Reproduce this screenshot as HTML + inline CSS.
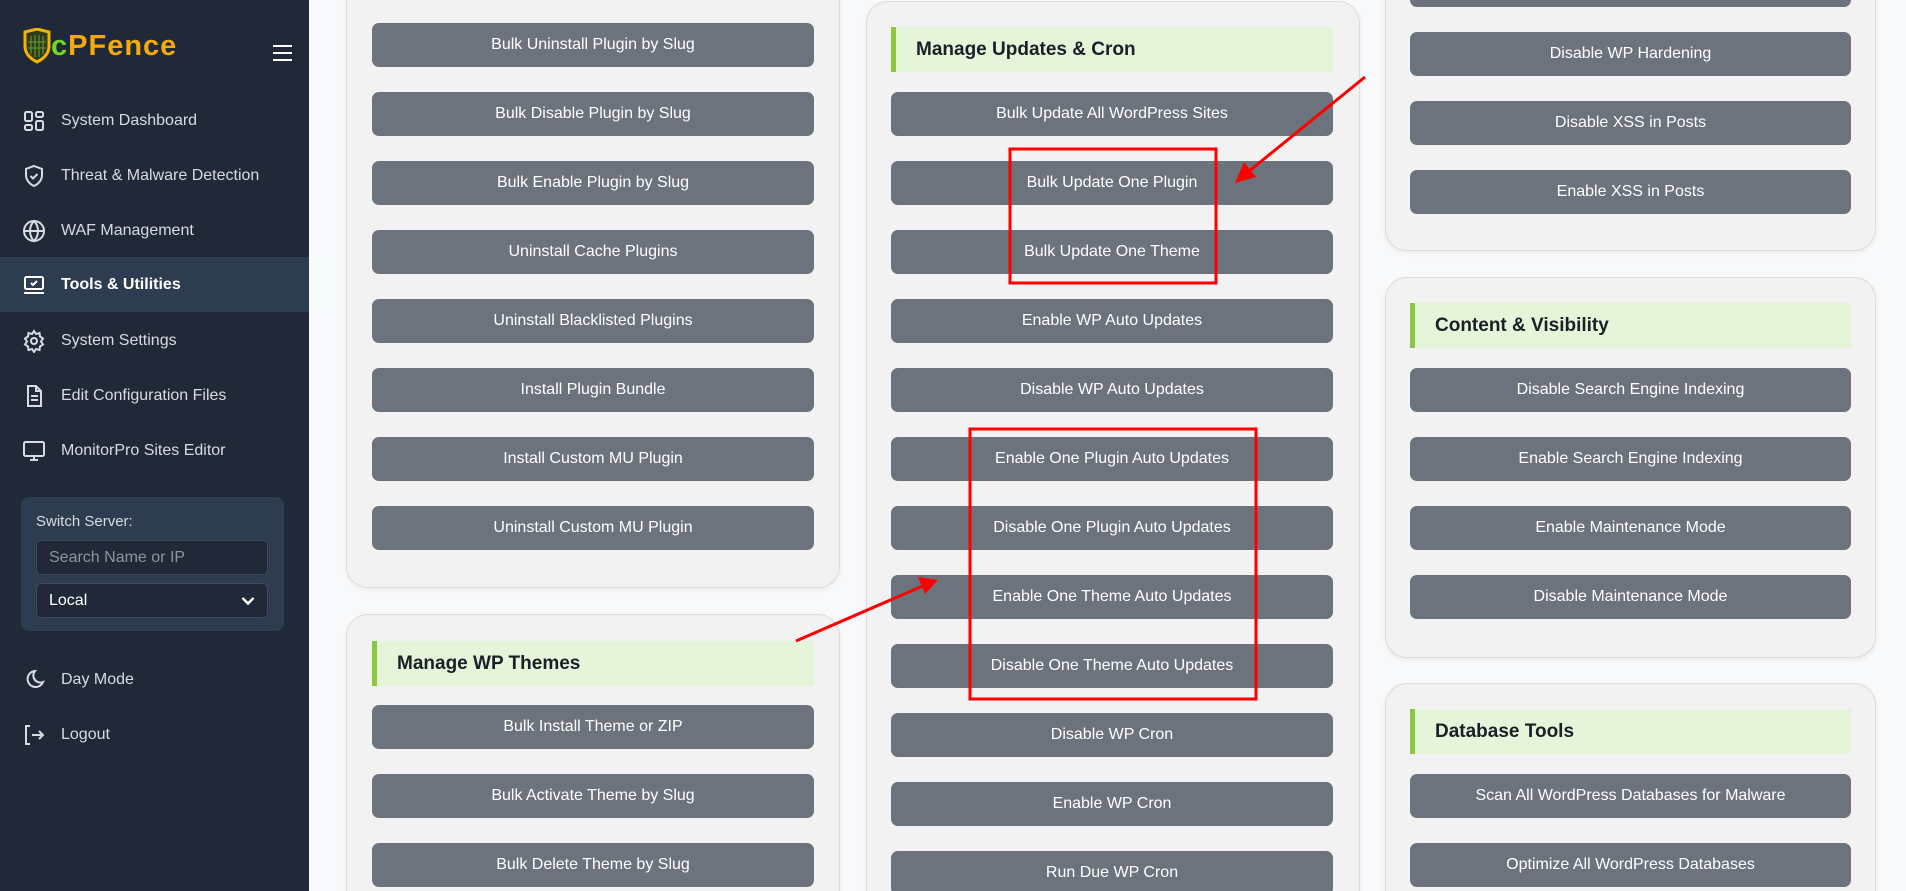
<!DOCTYPE html>
<html><head><meta charset="utf-8"><style>
*{box-sizing:border-box;margin:0;padding:0}
html,body{width:1906px;height:891px;overflow:hidden}
body{background:#f8f9fb;font-family:"Liberation Sans",sans-serif}
#wrap{position:relative;width:1906px;height:891px;overflow:hidden;background:#f8f9fb}
.sb{position:absolute;left:0;top:0;width:309px;height:891px;background:#1f2937}
.nav{position:absolute;left:0;width:309px;height:55px;color:#d8dce2;font-size:16px;display:flex;align-items:center}
.nav svg{position:absolute;left:22px;width:24px;height:24px}
.nav span{position:absolute;left:61px}
.nav.act{background:#2e3c50;color:#fff;font-weight:bold}
.card{position:absolute;background:#f2f2f2;border:1px solid #dcdcdc;border-radius:22px;box-shadow:0 2px 5px rgba(0,0,0,.06)}
.btn{position:absolute;height:44px;background:#6c737d;border-radius:7px;color:#fff;font-size:16px;display:flex;align-items:center;justify-content:center}
.ttl{position:absolute;height:45px;background:#e5f5d9;border-left:5px solid #8dc63f;color:#1b1f27;font-size:19px;font-weight:bold;display:flex;align-items:center;padding-left:20px}
.L{left:372px;width:442px}.M{left:891px;width:442px}.R{left:1410px;width:441px}
</style></head><body><div id="wrap">
<div class="sb">
  <svg style="position:absolute;left:22px;top:28px" width="30" height="36" viewBox="0 0 30 36"><path d="M3 4 L15 1 L27 4 L27 18 Q27 28 15 34 Q3 28 3 18 Z" fill="#2c3a22" stroke="#f5b400" stroke-width="3"/><path d="M9 8v18M13 7v22M17 7v22M21 8v18M6 14h18M6 20h18" stroke="#5f8f2a" stroke-width="1.3"/></svg>
  <div style="position:absolute;left:51px;top:30px;font-size:29px;font-weight:bold;letter-spacing:1px;line-height:32px"><span style="color:#72d52a">c</span><span style="color:#f7a90a">PFence</span></div>
  <div style="position:absolute;left:273px;top:45px;width:19px;height:2px;background:#fff;box-shadow:0 7px 0 #fff,0 14px 0 #fff"></div>

  <div class="nav" style="top:93px"><svg viewBox="0 0 24 24" fill="none" stroke="#d8dce2" stroke-width="2"><rect x="3" y="3" width="7" height="9" rx="1.5"/><rect x="14" y="3" width="7" height="5" rx="1.5"/><rect x="14" y="12" width="7" height="9" rx="1.5"/><rect x="3" y="16" width="7" height="5" rx="1.5"/></svg><span>System Dashboard</span></div>
  <div class="nav" style="top:148px"><svg viewBox="0 0 24 24" fill="none" stroke="#d8dce2" stroke-width="2"><path d="M12 2l8 3v6c0 5-3.5 9-8 11-4.5-2-8-6-8-11V5z"/><path d="M8.5 12l2.5 2.5 4.5-4.5"/></svg><span>Threat &amp; Malware Detection</span></div>
  <div class="nav" style="top:203px"><svg viewBox="0 0 24 24" fill="none" stroke="#d8dce2" stroke-width="2"><circle cx="12" cy="12" r="10"/><path d="M2 12h20M12 2c3 3 4 6.5 4 10s-1 7-4 10c-3-3-4-6.5-4-10s1-7 4-10z"/></svg><span>WAF Management</span></div>
  <div class="nav act" style="top:257px"><svg viewBox="0 0 24 24" fill="none" stroke="#fff" stroke-width="2"><rect x="3" y="4" width="18" height="12" rx="1.5"/><path d="M2 20h20M9 10l2 2 4-4"/></svg><span>Tools &amp; Utilities</span></div>
  <div class="nav" style="top:313px"><svg viewBox="0 0 24 24" fill="none" stroke="#d8dce2" stroke-width="2"><circle cx="12" cy="12" r="3"/><path d="M12 2l2 3 3.5-1 .5 3.5 3 2-2 3 2 3-3 2-.5 3.5-3.5-1-2 3-2-3-3.5 1-.5-3.5-3-2 2-3-2-3 3-2 .5-3.5 3.5 1z"/></svg><span>System Settings</span></div>
  <div class="nav" style="top:368px"><svg viewBox="0 0 24 24" fill="none" stroke="#d8dce2" stroke-width="2"><path d="M6 2h8l5 5v15H6z"/><path d="M14 2v5h5M9 12h7M9 16h7"/></svg><span>Edit Configuration Files</span></div>
  <div class="nav" style="top:423px"><svg viewBox="0 0 24 24" fill="none" stroke="#d8dce2" stroke-width="2"><rect x="2" y="3" width="20" height="14" rx="1.5"/><path d="M8 21h8M12 17v4"/></svg><span>MonitorPro Sites Editor</span></div>

  <div style="position:absolute;left:21px;top:497px;width:263px;height:134px;background:#2e3c50;border-radius:8px">
    <div style="position:absolute;left:15px;top:16px;color:#d8dce2;font-size:15px">Switch Server:</div>
    <div style="position:absolute;left:15px;top:43px;width:232px;height:35px;background:#1f2937;border:1px solid #3f4a5a;border-radius:5px;color:#8c95a2;font-size:16px;padding:8px 12px">Search Name or IP</div>
    <div style="position:absolute;left:15px;top:86px;width:232px;height:35px;background:#1f2937;border:1px solid #3f4a5a;border-radius:5px;color:#fff;font-size:16px;padding:8px 12px">Local<svg style="position:absolute;right:12px;top:12px" width="14" height="10" viewBox="0 0 14 10"><path d="M1.5 2l5.5 5.5 5.5-5.5" fill="none" stroke="#fff" stroke-width="2.5"/></svg></div>
  </div>
  <div class="nav" style="top:652px"><svg viewBox="0 0 24 24" fill="none" stroke="#d8dce2" stroke-width="2"><path d="M13 3a8 8 0 1 0 8 11 7 7 0 0 1-8-11z"/></svg><span>Day Mode</span></div>
  <div class="nav" style="top:707px"><svg viewBox="0 0 24 24" fill="none" stroke="#d8dce2" stroke-width="2"><path d="M8 3H4v18h4M10 12h11M17 8l4 4-4 4"/></svg><span>Logout</span></div>
</div>

<div class="card" style="left:346px;top:-30px;width:494px;height:618px"></div>
<div class="card" style="left:346px;top:614px;width:494px;height:320px"></div>
<div class="card" style="left:866px;top:1px;width:494px;height:950px"></div>
<div class="card" style="left:1385px;top:-30px;width:491px;height:281px"></div>
<div class="card" style="left:1385px;top:277px;width:491px;height:381px"></div>
<div class="card" style="left:1385px;top:683px;width:491px;height:300px"></div>

<div class="btn L" style="top:23px">Bulk Uninstall Plugin by Slug</div>
<div class="btn L" style="top:92px">Bulk Disable Plugin by Slug</div>
<div class="btn L" style="top:161px">Bulk Enable Plugin by Slug</div>
<div class="btn L" style="top:230px">Uninstall Cache Plugins</div>
<div class="btn L" style="top:299px">Uninstall Blacklisted Plugins</div>
<div class="btn L" style="top:368px">Install Plugin Bundle</div>
<div class="btn L" style="top:437px">Install Custom MU Plugin</div>
<div class="btn L" style="top:506px">Uninstall Custom MU Plugin</div>
<div class="ttl L" style="top:641px">Manage WP Themes</div>
<div class="btn L" style="top:705px">Bulk Install Theme or ZIP</div>
<div class="btn L" style="top:774px">Bulk Activate Theme by Slug</div>
<div class="btn L" style="top:843px">Bulk Delete Theme by Slug</div>

<div class="ttl M" style="top:27px">Manage Updates &amp; Cron</div>
<div class="btn M" style="top:92px">Bulk Update All WordPress Sites</div>
<div class="btn M" style="top:161px">Bulk Update One Plugin</div>
<div class="btn M" style="top:230px">Bulk Update One Theme</div>
<div class="btn M" style="top:299px">Enable WP Auto Updates</div>
<div class="btn M" style="top:368px">Disable WP Auto Updates</div>
<div class="btn M" style="top:437px">Enable One Plugin Auto Updates</div>
<div class="btn M" style="top:506px">Disable One Plugin Auto Updates</div>
<div class="btn M" style="top:575px">Enable One Theme Auto Updates</div>
<div class="btn M" style="top:644px">Disable One Theme Auto Updates</div>
<div class="btn M" style="top:713px">Disable WP Cron</div>
<div class="btn M" style="top:782px">Enable WP Cron</div>
<div class="btn M" style="top:851px">Run Due WP Cron</div>

<div class="btn R" style="top:-37px"></div>
<div class="btn R" style="top:32px">Disable WP Hardening</div>
<div class="btn R" style="top:101px">Disable XSS in Posts</div>
<div class="btn R" style="top:170px">Enable XSS in Posts</div>
<div class="ttl R" style="top:303px">Content &amp; Visibility</div>
<div class="btn R" style="top:368px">Disable Search Engine Indexing</div>
<div class="btn R" style="top:437px">Enable Search Engine Indexing</div>
<div class="btn R" style="top:506px">Enable Maintenance Mode</div>
<div class="btn R" style="top:575px">Disable Maintenance Mode</div>
<div class="ttl R" style="top:709px">Database Tools</div>
<div class="btn R" style="top:774px">Scan All WordPress Databases for Malware</div>
<div class="btn R" style="top:843px">Optimize All WordPress Databases</div>

<svg style="position:absolute;left:0;top:0" width="1906" height="891">
  <rect x="1010" y="149" width="206" height="134" fill="none" stroke="#f00" stroke-width="3"/>
  <rect x="970" y="429" width="286" height="270" fill="none" stroke="#f00" stroke-width="3"/>
  <path d="M1365 77 L1248 172" stroke="#f00" stroke-width="3"/>
  <path d="M1235 183 L1244 162 L1256 177 Z" fill="#f00"/>
  <path d="M796 641 L925 585" stroke="#f00" stroke-width="3"/>
  <path d="M938 580 L918 577 L925 594 Z" fill="#f00"/>
</svg>
</div></body></html>
